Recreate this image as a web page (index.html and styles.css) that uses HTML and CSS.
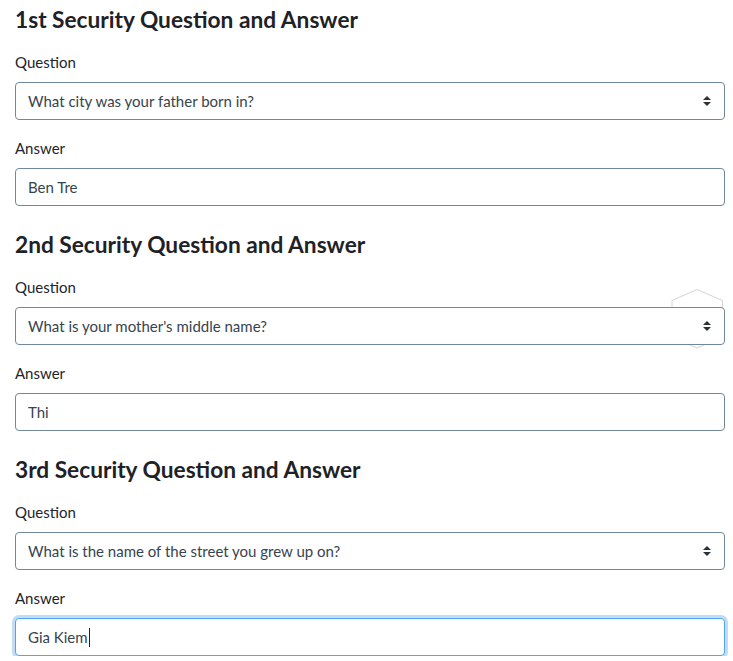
FILE: index.html
```html
<!DOCTYPE html>
<html lang="en">
<head>
<meta charset="utf-8">
<title>Security Questions</title>
<link rel="stylesheet" href="styles.css">
</head>
<body>
<div class="page">
  <section class="block">
    <h2 class="title">1st Security Question and Answer</h2>
    <label class="label">Question</label>
    <div class="select">
      <span class="value">What city was your father born in?</span>
      <svg class="arrows" width="10" height="12" viewBox="0 0 10 12"><path d="M1 5 L5 1 L9 5 Z M1 7 L5 11 L9 7 Z" fill="#2b3338"/></svg>
    </div>
    <label class="label">Answer</label>
    <div class="input"><span class="value">Ben Tre</span></div>
  </section>
  <section class="block">
    <h2 class="title">2nd Security Question and Answer</h2>
    <label class="label">Question</label>
    <div class="select-wrap">
      <svg class="ghost" width="54" height="60" viewBox="0 0 54 60"><path d="M1 11.5 L26 0.5 L51.5 11.5 L51.5 48 L26 59 L1 48 Z" fill="#fff" stroke="#d4d4d4" stroke-width="1"/></svg>
      <div class="select">
        <span class="value">What is your mother's middle name?</span>
        <svg class="arrows" width="10" height="12" viewBox="0 0 10 12"><path d="M1 5 L5 1 L9 5 Z M1 7 L5 11 L9 7 Z" fill="#2b3338"/></svg>
      </div>
    </div>
    <label class="label">Answer</label>
    <div class="input"><span class="value">Thi</span></div>
  </section>
  <section class="block">
    <h2 class="title">3rd Security Question and Answer</h2>
    <label class="label">Question</label>
    <div class="select">
      <span class="value">What is the name of the street you grew up on?</span>
      <svg class="arrows" width="10" height="12" viewBox="0 0 10 12"><path d="M1 5 L5 1 L9 5 Z M1 7 L5 11 L9 7 Z" fill="#2b3338"/></svg>
    </div>
    <label class="label">Answer</label>
    <div class="input focus"><span class="value">Gia Kiem</span><span class="caret"></span></div>
  </section>
</div>
</body>
</html>
```
FILE: styles.css
```css
html, body {
  margin: 0;
  padding: 0;
  background: #ffffff;
}
body {
  font-family: "Lato", "Liberation Sans", sans-serif;
  color: #212529;
}
.page {
  width: 710px;
  padding: 7px 15px 0 15px;
  display: flex;
  flex-direction: column;
  gap: 26px;
}
.block {
  display: flex;
  flex-direction: column;
}
.title {
  margin: 0 0 19px 0;
  font-size: 22.7px;
  line-height: 26px;
  font-weight: 700;
  color: #1e2226;
}
.label {
  display: block;
  font-size: 15px;
  line-height: 21px;
  margin-bottom: 9px;
  color: #212529;
}
.select, .input {
  box-sizing: border-box;
  height: 38px;
  border: 1px solid #71879a;
  border-radius: 4px;
  background: #fff;
  display: flex;
  align-items: center;
  padding: 0 12px;
  font-size: 15px;
  color: #36444f;
}
.select {
  justify-content: space-between;
  margin-bottom: 18px;
  padding-right: 12px;
}
.select-wrap {
  position: relative;
  margin-bottom: 18px;
}
.select-wrap .select {
  margin-bottom: 0;
  position: relative;
}
.ghost {
  position: absolute;
  right: 0;
  top: -18px;
}
.arrows {
  display: block;
}
.input.focus {
  border-color: #4ea6f2;
  box-shadow: 0 0 0 3px #c4dcf3;
}
.caret {
  display: inline-block;
  width: 1px;
  height: 19px;
  background: #1e2226;
  margin-left: 1px;
}
```
